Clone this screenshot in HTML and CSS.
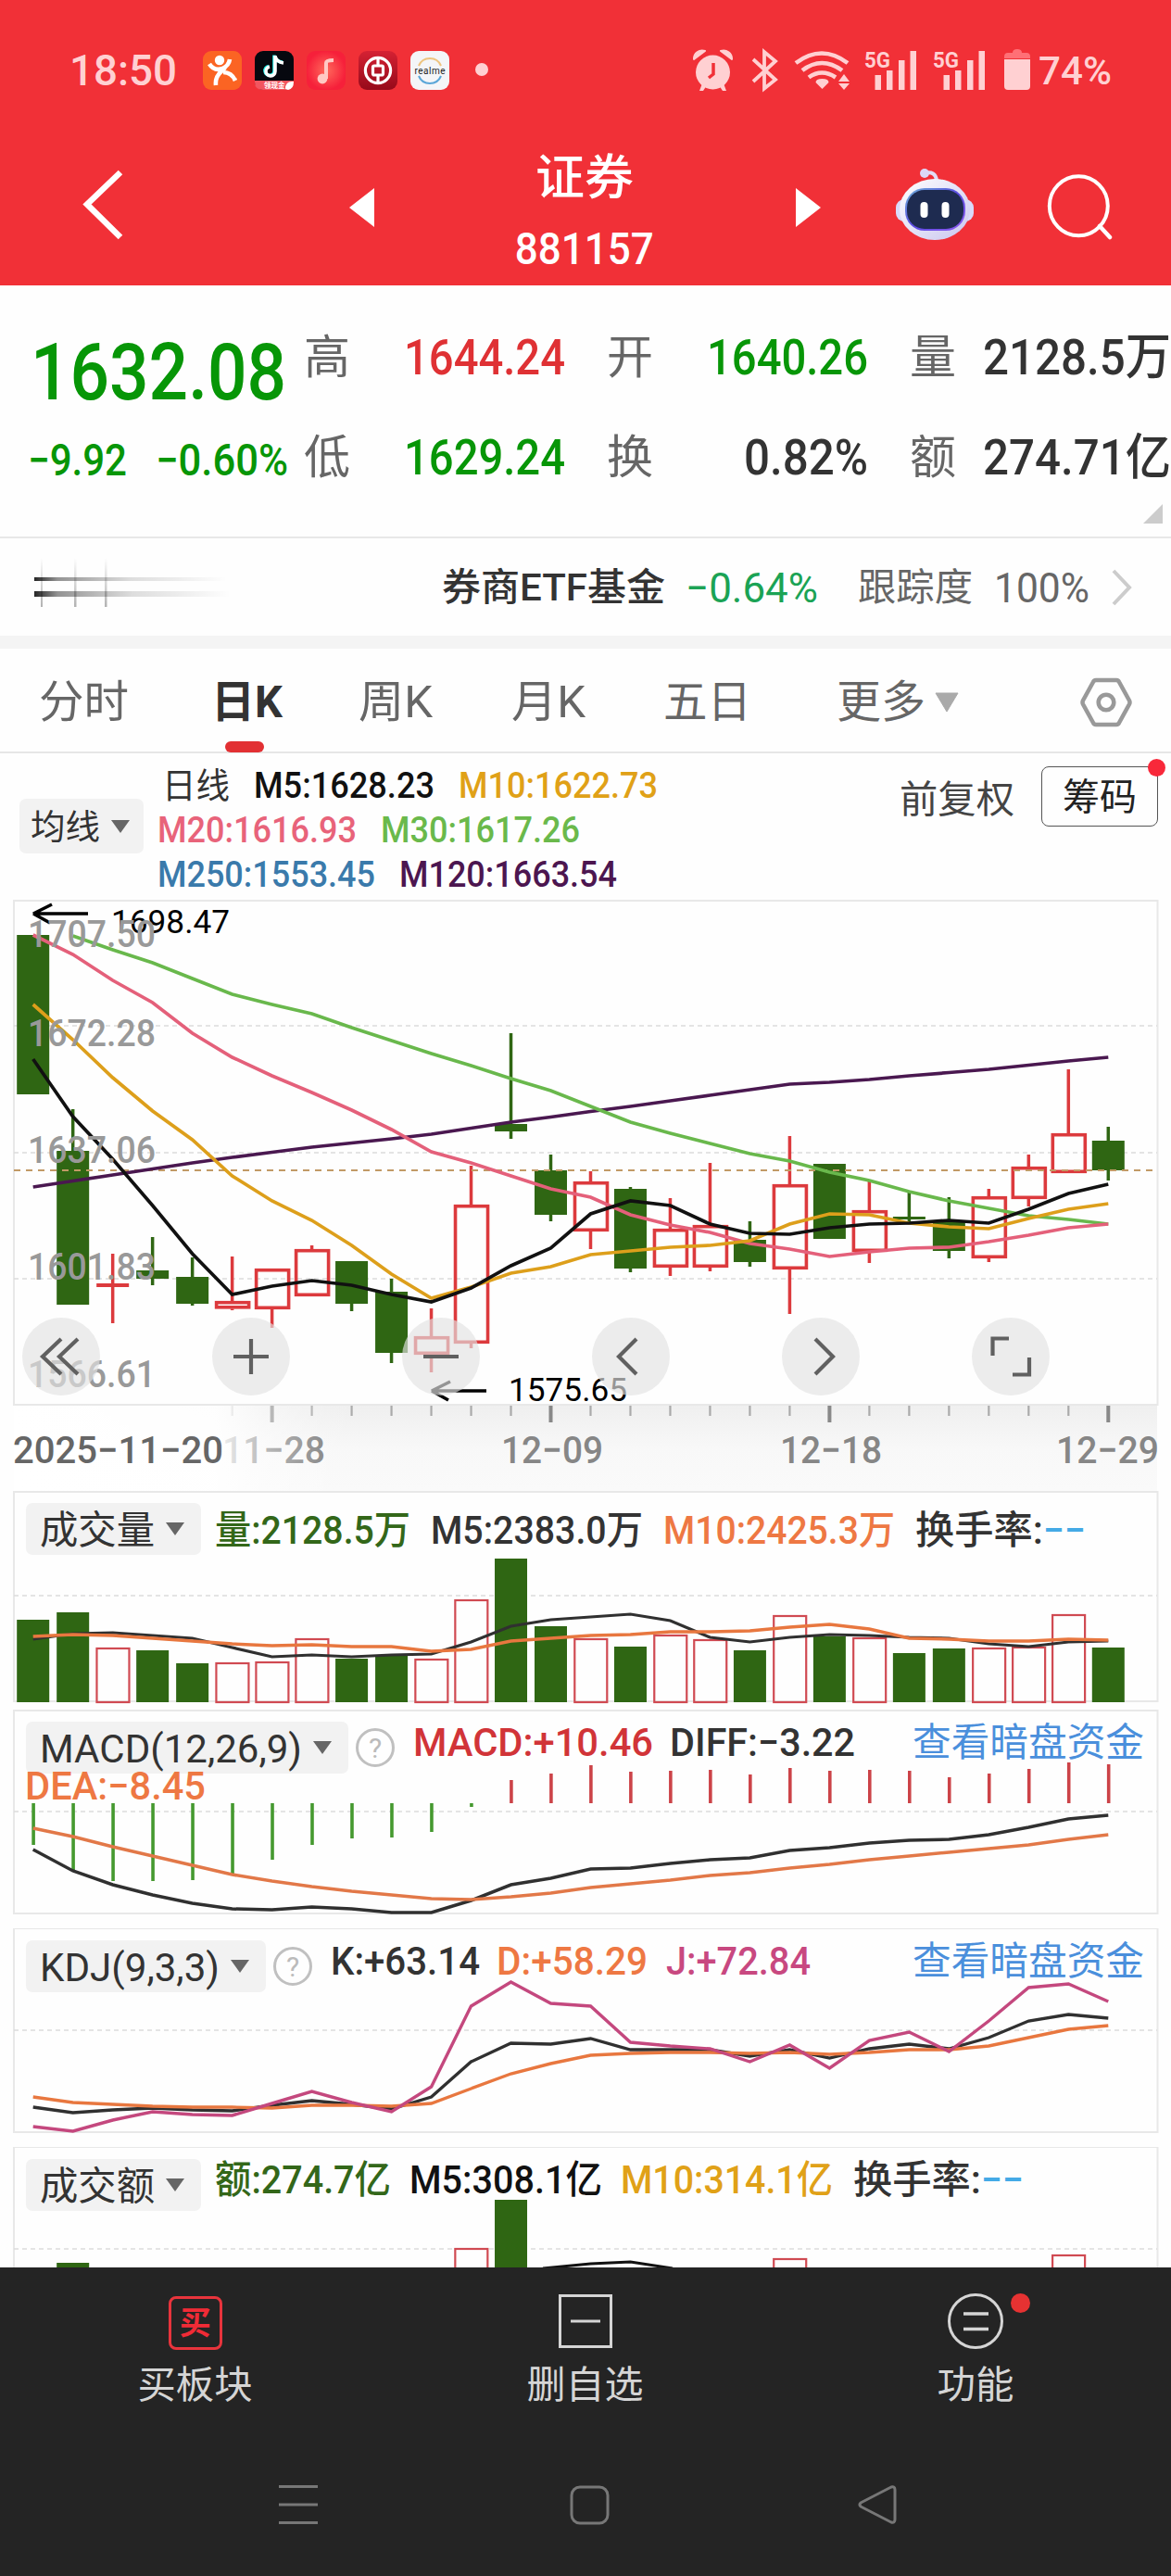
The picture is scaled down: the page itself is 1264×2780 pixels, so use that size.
FILE: index.html
```html
<!DOCTYPE html>
<html lang="zh-CN">
<head>
<meta charset="utf-8">
<title>证券 881157</title>
<link rel="stylesheet" href="styles.css">
</head>
<body>
<div class="screen">

<header class="top">
  <div class="status">
    <span class="fit clock" data-w="116">18:50</span>
    <div class="apps">
      <svg class="app" viewBox="0 0 42 42"><rect width="42" height="42" rx="9" fill="#fb6423"/><circle cx="18" cy="10" r="5.2" fill="#fff"/><path d="M7 14q5 8 14 5q7-3 8-10M14 37q-1-9 6-15l4-4M22 23q9 0 13 9" fill="none" stroke="#fff" stroke-width="4.6"/></svg>
      <svg class="app" viewBox="0 0 42 42"><rect width="42" height="42" rx="9" fill="#06080f"/><path d="M22 5v17a5 5 0 1 1-6-5M22 6q2 6 9 7" fill="none" stroke="#25f4ee" stroke-width="3.6" transform="translate(-1 -.6)"/><path d="M22 5v17a5 5 0 1 1-6-5M22 6q2 6 9 7" fill="none" stroke="#fff" stroke-width="3.6"/><path d="M0 32h42v2q0 8-9 8H9q-9 0-9-8z" fill="#f2555f"/><text x="10" y="40" font-size="7.5" font-weight="700" fill="#fff">领现金</text><path d="M33 41q0-9 9-8q0 8-6 9z" fill="#fff"/></svg>
      <svg class="app" viewBox="0 0 42 42"><defs><radialGradient id="mus"><stop offset="0" stop-color="#ff6a5c"/><stop offset="1" stop-color="#f6203a"/></radialGradient></defs><rect width="42" height="42" rx="9" fill="url(#mus)"/><circle cx="17" cy="30" r="5.4" fill="#ffc9c4"/><path d="M21 30V13q0-3 8-3" fill="none" stroke="#ffc9c4" stroke-width="4"/></svg>
      <svg class="app" viewBox="0 0 42 42"><defs><linearGradient id="boc" y2="1" x2="0"><stop stop-color="#d52133"/><stop offset="1" stop-color="#960a1a"/></linearGradient></defs><rect width="42" height="42" rx="9" fill="url(#boc)"/><g fill="none" stroke="#fff" stroke-width="3.2"><circle cx="21" cy="21" r="13.6"/><rect x="15.5" y="16" width="11" height="10" rx="1.5"/><path d="M21 7v9m0 10v9"/></g></svg>
      <svg class="app" viewBox="0 0 42 42"><rect width="42" height="42" rx="9" fill="#f4f5f8"/><path d="M9 16a13 13 0 0 1 24 0" fill="none" stroke="#eec37e" stroke-width="2"/><path d="M9 27a13 13 0 0 0 24 0" fill="none" stroke="#5aa6d8" stroke-width="2"/><text x="4.500" y="24.500" font-size="10" textLength="33" fill="#222">realme</text></svg>
    </div>
    <span class="more-dot"></span>
    <svg class="sys" viewBox="740 0 380 150" width="380" height="150">
      <g fill="#ffd0d2">
        <circle cx="768.500" cy="78" r="18.500"/>
        <path d="M748 64a9 9 0 0 1 12-9zM789 64a9 9 0 0 0-12-9z" stroke="#ffd0d2" stroke-width="2" stroke-linejoin="round"/>
        <path d="M757 90l-3 8h4l4-6zM780 90l3 8h-4l-4-6z"/>
        <path d="M886.500 96l-7-7q0-4 7-4t7 4z"/>
        <path d="M905 88l6-8 6 8zM905 90l6 7 6-7z" transform="translate(-1 0)"/>
        <rect x="943.500" y="81" width="6.500" height="16"/><rect x="956" y="76" width="6.500" height="21"/><rect x="969" y="65" width="6.500" height="32"/><rect x="981.500" y="55" width="6.500" height="42"/>
        <rect x="1017.500" y="81" width="6.500" height="16"/><rect x="1030" y="76" width="6.500" height="21"/><rect x="1043" y="65" width="6.500" height="32"/><rect x="1055.500" y="55" width="6.500" height="42"/>
        <path d="M1083 64h28v29q0 4-4 4h-20q-4 0-4-4z"/>
        <text x="932" y="72.500" font-size="24" font-weight="700" textLength="28" lengthAdjust="spacingAndGlyphs">5G</text>
        <text x="1006" y="72.500" font-size="24" font-weight="700" textLength="28" lengthAdjust="spacingAndGlyphs">5G</text>
      </g>
      <path d="M1083 63v-2q0-4 4-4h5q0-4 5-4t5 4h5q4 0 4 4v2z" fill="#ff7076"/>
      <path d="M769 68v12l-5 4" fill="none" stroke="#f13037" stroke-width="3.500"/>
      <path d="M812 64l24 22-12 9.500V56l12 10-24 22" fill="none" stroke="#ffd0d2" stroke-width="3.800"/>
      <g fill="none" stroke="#ffd0d2" stroke-width="4.600"><path d="M858 68q28-21 56 0M865 76q21-16 43 0M872 83.500q14-10 29 0"/></g>
    </svg>
    <span class="fit battery" data-w="79">74%</span>
  </div>

  <nav class="nav">
    <svg class="nav-back" viewBox="85 150 52 158" width="52" height="158"><path d="M130 186l-36 34.500 36 35.500" fill="none" stroke="#fff" stroke-width="6.500"/></svg>
    <svg class="nav-prev" viewBox="377 150 27 158" width="27" height="158"><path d="M404 203v42l-27-21z" fill="#fff"/></svg>
    <div class="title">
      <h1 class="fit" data-w="106">证券</h1>
      <p class="fit" data-w="150">881157</p>
    </div>
    <svg class="nav-next" viewBox="859 150 27 158" width="27" height="158"><path d="M859 203v42l27-21z" fill="#fff"/></svg>
    <svg class="nav-bot" viewBox="965 150 88 158" width="88" height="158">
      <defs><linearGradient id="shell" x2="1" y2="1"><stop stop-color="#fff"/><stop offset="1" stop-color="#c9c6ef"/></linearGradient>
      <linearGradient id="rim" x2="1" y2="1"><stop stop-color="#6fb4d8"/><stop offset=".5" stop-color="#5a4ae0"/><stop offset="1" stop-color="#8f5bf0"/></linearGradient></defs>
      <path d="M998 187q12-3 13 8" fill="none" stroke="#e2dcf5" stroke-width="4"/><circle cx="998" cy="187" r="5" fill="#dcd8f6"/>
      <rect x="967" y="215" width="84" height="24" rx="9" fill="#d9dafa"/>
      <ellipse cx="1009" cy="226" rx="38" ry="33" fill="url(#shell)"/>
      <rect x="977" y="203" width="65" height="46" rx="21" fill="url(#rim)"/>
      <rect x="979" y="205" width="61" height="42" rx="19" fill="#1e2b50"/>
      <rect x="993.500" y="218" width="8" height="17" rx="4" fill="#fff"/><rect x="1016.500" y="218" width="8" height="17" rx="4" fill="#fff"/>
    </svg>
    <svg class="nav-search" viewBox="1129 150 74 158" width="74" height="158"><ellipse cx="1164.300" cy="222.300" rx="31.500" ry="32" fill="none" stroke="#fff" stroke-width="4"/><path d="M1187 244l11 12" stroke="#fff" stroke-width="4.500" stroke-linecap="round"/></svg>
  </nav>
</header>

<section class="quote">
  <div class="last">
    <div class="price"><span class="fit" data-w="276">1632.08</span></div>
    <div class="change"><span class="fit" data-w="107">−9.92</span><span class="fit" data-w="143">−0.60%</span></div>
  </div>
  <div class="figures">
    <div class="pair"><span>高</span><b class="fit up" data-w="174">1644.24</b></div>
    <div class="pair"><span>开</span><b class="fit down" data-w="174">1640.26</b></div>
    <div class="pair"><span>量</span><b class="fit" data-w="203">2128.5万</b></div>
    <div class="pair"><span>低</span><b class="fit down" data-w="174">1629.24</b></div>
    <div class="pair"><span>换</span><b class="fit" data-w="134">0.82%</b></div>
    <div class="pair"><span>额</span><b class="fit" data-w="203">274.71亿</b></div>
  </div>
  <i class="corner"></i>
</section>

<section class="etf">
  <svg class="smear" viewBox="30 581 230 105" width="230" height="105">
    <defs><linearGradient id="sm" x2="1"><stop stop-color="#000" stop-opacity=".85"/><stop offset=".12" stop-color="#000" stop-opacity=".42"/><stop offset=".5" stop-color="#000" stop-opacity=".13"/><stop offset="1" stop-color="#000" stop-opacity="0"/></linearGradient>
    <linearGradient id="sv" x2="0" y2="1"><stop stop-color="#000" stop-opacity="0"/><stop offset="1" stop-color="#000" stop-opacity=".3"/></linearGradient></defs>
    <rect x="37" y="623" width="208" height="4" fill="url(#sm)"/><rect x="37" y="638" width="212" height="6" fill="url(#sm)"/>
    <g fill="url(#sv)"><rect x="44" y="602" width="2" height="53"/><rect x="80" y="602" width="2.500" height="53"/><rect x="113" y="602" width="2.500" height="53"/></g>
  </svg>
  <span class="fit etf-name" data-w="241">券商ETF基金</span>
  <span class="fit etf-chg" data-w="143">−0.64%</span>
  <span class="fit etf-lab" data-w="124">跟踪度</span>
  <span class="fit etf-val" data-w="103">100%</span>
  <svg viewBox="0 0 24 40" width="24" height="40"><path d="M3 2l17 18L3 38" fill="none" stroke="#ccc" stroke-width="4"/></svg>
</section>

<nav class="tabs">
  <span class="fit" data-w="97">分时</span>
  <span class="fit active" data-w="77">日K</span>
  <span class="fit" data-w="80">周K</span>
  <span class="fit" data-w="80">月K</span>
  <span class="fit" data-w="95">五日</span>
  <span class="fit" data-w="96">更多</span>
  <svg class="tri" viewBox="0 0 26 22" width="26" height="22"><path d="M1 1h24L13 21z" fill="#aaa" stroke="#aaa" stroke-linejoin="round"/></svg>
  <svg class="gear" viewBox="0 0 58 54" width="58" height="54"><g fill="none" stroke="#999"><path d="M18 3h22q2 0 3 2l11 20q1 2 0 4L43 49q-1 2-3 2H18q-2 0-3-2L4 29q-1-2 0-4L15 5q1-2 3-2z" stroke-width="4.500"/><circle cx="29" cy="27" r="8.300" stroke-width="4.600"/></g></svg>
</nav>

<section class="ma">
  <span class="chip ma-chip"><span class="fit" data-w="75">均线</span><i></i></span>
  <div class="ma-rows">
    <div><span class="fit c-dark" data-w="73">日线</span><span class="fit c-black" data-w="195">M5:1628.23</span><span class="fit c-gold" data-w="215">M10:1622.73</span></div>
    <div><span class="fit c-pink" data-w="215">M20:1616.93</span><span class="fit c-lime" data-w="215">M30:1617.26</span></div>
    <div><span class="fit c-blue" data-w="235">M250:1553.45</span><span class="fit c-plum" data-w="235">M120:1663.54</span></div>
  </div>
  <span class="fit adjust" data-w="124">前复权</span>
  <span class="chips-btn"><span class="fit" data-w="80">筹码</span></span>
</section>

<section class="panel">
  <svg id="kline" viewBox="0 971 1264 546" width="1264" height="546"></svg>
  <div class="tools">
    <button><svg viewBox="-42 -42 84 84"><path d="M0-19L-20 0 0 19M18-19L-2 0 18 19"/></svg></button>
    <button><svg viewBox="-42 -42 84 84"><path d="M-19 0h38M0-19v38"/></svg></button>
    <button><svg viewBox="-42 -42 84 84"><path d="M-19 0h38"/></svg></button>
    <button><svg viewBox="-42 -42 84 84"><path d="M6-19L-13 0 6 19"/></svg></button>
    <button><svg viewBox="-42 -42 84 84"><path d="M-6-19L13 0-6 19"/></svg></button>
    <button><svg viewBox="-42 -42 84 84"><path d="M-2-19.500h-17.500V-1M2 19.500h18V1"/></svg></button>
  </div>
</section>

<svg id="axis" class="block" viewBox="0 1517 1264 92" width="1264" height="92"></svg>

<section class="panel volume">
  <svg id="volume" viewBox="0 1609 1264 236" width="1264" height="236"></svg>
  <div class="legend">
    <span class="chip"><span class="fit" data-w="124">成交量</span><i></i></span>
    <span class="fit c-green g15" data-w="211">量:2128.5万</span>
    <span class="fit c-dark g22" data-w="229">M5:2383.0万</span>
    <span class="fit c-orange g22" data-w="250">M10:2425.3万</span>
    <span class="fit c-dark g22" data-w="138">换手率:</span><span class="fit c-sky" data-w="46">−−</span>
  </div>
</section>

<section class="panel">
  <svg id="macd" viewBox="0 1845 1264 236" width="1264" height="236"></svg>
  <div class="legend">
    <span class="chip"><span class="fit" data-w="283">MACD(12,26,9)</span><i></i></span>
    <span class="help">?</span>
    <span class="fit c-red g20" data-w="259">MACD:+10.46</span>
    <span class="fit c-dark g18" data-w="200">DIFF:−3.22</span>
    <a class="fit link" data-w="250">查看暗盘资金</a>
    <span class="fit c-orange second" data-w="195">DEA:−8.45</span>
  </div>
</section>

<section class="panel">
  <svg id="kdj" viewBox="0 2081 1264 236" width="1264" height="236"></svg>
  <div class="legend">
    <span class="chip"><span class="fit" data-w="194">KDJ(9,3,3)</span><i></i></span>
    <span class="help">?</span>
    <span class="fit c-dark g20" data-w="161">K:+63.14</span>
    <span class="fit c-orange g18" data-w="163">D:+58.29</span>
    <span class="fit c-rose g20" data-w="156">J:+72.84</span>
    <a class="fit link" data-w="250">查看暗盘资金</a>
  </div>
</section>

<section class="panel amount">
  <svg id="amount" viewBox="0 2317 1264 130" width="1264" height="130"></svg>
  <div class="legend">
    <span class="chip"><span class="fit" data-w="124">成交额</span><i></i></span>
    <span class="fit c-green g15" data-w="190">额:274.7亿</span>
    <span class="fit c-black g20" data-w="208">M5:308.1亿</span>
    <span class="fit c-gold g20" data-w="229">M10:314.1亿</span>
    <span class="fit c-dark g22" data-w="138">换手率:</span><span class="fit c-sky" data-w="46">−−</span>
  </div>
</section>

<footer class="bottom">
  <div class="actions">
    <div class="action"><span class="buy">买</span><span class="fit" data-w="124">买板块</span></div>
    <div class="action"><svg viewBox="0 0 60 60" width="60" height="60"><path d="M2.500 2.500h55v55h-55zM14 30h32" fill="none" stroke="#d5d5d5" stroke-width="3"/></svg><span class="fit" data-w="126">删自选</span></div>
    <div class="action"><svg viewBox="0 0 60 60" width="60" height="60"><circle cx="30" cy="30" r="28.500" fill="none" stroke="#d5d5d5" stroke-width="3"/><path d="M17 22h27M17 38.500h27" stroke="#d5d5d5" stroke-width="3.500"/></svg><i class="badge"></i><span class="fit" data-w="83">功能</span></div>
  </div>
  <svg class="block" viewBox="0 2640 1264 140" width="1264" height="140"><g fill="none" stroke="#777" stroke-width="3"><path d="M301 2683.500h42M301 2703h42M301 2722.500h42"/><rect x="617" y="2684" width="39" height="39" rx="9"/><path d="M929 2701l33-17q4-1 4 3v32q0 4-4 3l-33-17q-2-2 0-4z" stroke-linejoin="round"/></g></svg>
</footer>
</div>
<script src="chart.js"></script>
</body>
</html>
```
FILE: styles.css
```css
* { box-sizing: border-box; margin: 0; padding: 0; }
body {
  width: 1264px;
  background: #fefefe;
  color: #333;
  font-family: Roboto, "Noto Sans CJK SC", sans-serif;
}
svg { display: block; flex: none; }
svg text { font-family: Roboto, "Noto Sans CJK SC", sans-serif; }
.screen { width: 1264px; height: 2780px; overflow: hidden; }
.fit { display: inline-block; flex: none; white-space: nowrap; transform-origin: 0 50%; }

/* status bar and title */
.top { height: 308px; background: #f13037; color: #fff; }
.status { height: 150px; display: flex; align-items: center; padding-left: 75px; }
.clock { font-size: 47px; font-weight: 500; line-height: 150px; padding-top: 2px; color: #ffd0d2; }
.apps { display: flex; gap: 14px; margin-left: 28px; padding-top: 2px; }
.app { width: 42px; height: 42px; }
.more-dot { width: 14px; height: 14px; border-radius: 50%; background: #ffd0d2; margin-left: 28px; }
.sys { margin-left: 214px; }
.battery { font-size: 42px; font-weight: 500; color: #ffd0d2; line-height: 150px; padding-top: 4px; }
.nav { height: 158px; display: flex; }
.nav-back { margin-left: 85px; }
.nav-prev { margin-left: 240px; }
.title { width: 170px; margin-left: 142px; display: flex; flex-direction: column; align-items: center; }
.title h1 { font-size: 52px; font-weight: 500; line-height: 76px; margin-top: 5px; }
.title p { font-size: 48px; line-height: 76px; font-weight: 500; }
.nav-next { margin-left: 143px; }
.nav-bot { margin-left: 79px; }
.nav-search { margin-left: 76px; }

/* quote */
.quote { position: relative; height: 273px; display: flex; border-bottom: 2px solid #e8e8e8; }
.last { width: 328px; padding-top: 42px; color: #079607; font-weight: 500; }
.price { font-size: 86px; line-height: 104px; padding-left: 33px; height: 104px; }
.change { font-size: 48px; line-height: 86px; padding-left: 30px; display: flex; gap: 31px; }
.figures { width: 936px; padding-top: 24px; display: grid; grid-template-columns: 282px 282px 282px; column-gap: 45px; grid-auto-rows: 108px; }
.pair { display: flex; justify-content: space-between; line-height: 108px; font-size: 50px; color: #666; }
.pair b { font-size: 53px; font-weight: 500; color: #333; }
.pair b.up { color: #df3134; }
.pair b.down { color: #079607; }
.corner { position: absolute; right: 9px; top: 236px; border: solid transparent; border-width: 0 0 21px 21px; border-bottom-color: #ccc; }

/* linked fund */
.etf { height: 119px; display: flex; align-items: center; padding-left: 30px; border-bottom: 14px solid #f4f4f4; line-height: 107px; font-size: 41px; color: #666; }
.etf .fit { padding-top: 2px; }
.etf-name { margin-left: 217px; color: #333; font-weight: 500; }
.etf-chg { margin-left: 22px; font-size: 45px; color: #1ba355; }
.etf-lab { margin-left: 43px; }
.etf-val { margin: 0 23px 0 23px; font-size: 45px; }

/* period tabs */
.tabs { position: relative; height: 113px; display: flex; align-items: center; padding: 5px 0 0 42px; border-bottom: 2px solid #e6e6e6; font-size: 48px; line-height: 108px; color: #666; }
.tabs .active { color: #333; font-weight: 700; margin: 0 82px 0 89px; }
.tabs .fit:nth-child(3) { margin-right: 85px; }
.tabs .fit:nth-child(5) { margin: 0 92px 0 84px; }
.tabs .tri { margin-left: 10px; }
.tabs .gear { margin-left: 130px; }
.tabs::after { content: ""; position: absolute; left: 243px; bottom: -1px; width: 42px; height: 12px; border-radius: 6px; background: #e23033; }

/* moving averages */
.chip { flex: none; display: flex; align-items: center; gap: 12px; height: 56px; padding-left: 15px; background: #f2f2f2; border-radius: 7px; line-height: 56px; font-size: 42px; font-weight: 400; color: #333; padding-right: 18px; }
.chip .fit { padding-top: 3px; }
.chip i { border: solid transparent; border-width: 14px 10.5px 0; border-top-color: #666; }
.ma { height: 158px; display: flex; padding: 0 14px 0 21px; }
.ma-chip { height: 59px; width: 134px; margin-top: 49px; padding: 0 12px; line-height: 59px; font-size: 37px; }
.ma-rows { width: 780px; padding: 11px 0 0 15px; font-size: 39px; line-height: 48px; }
.ma-rows div { display: flex; height: 48px; gap: 26px; }
.ma-rows div:first-child { padding-left: 5px; font-size: 38px; }
.ma-rows .fit { font-weight: 500; }
.ma-rows .c-dark { font-weight: 400; }
.adjust { margin: 26px 0 0 36px; font-size: 41px; line-height: 48px; color: #444; }
.chips-btn { position: relative; width: 126px; height: 65px; margin: 14px 0 0 29px; padding-left: 22px; border: 1.5px solid #555; border-radius: 8px; font-size: 40px; line-height: 65px; color: #222; }
.chips-btn::after { content: ""; position: absolute; right: -9px; top: -9px; width: 19px; height: 19px; border-radius: 50%; background: #f8283a; }

/* chart panels: drawing and legend share one grid cell */
.panel { display: grid; }
.panel > * { grid-area: 1 / 1; }
.tools { align-self: start; display: flex; gap: 121px; margin: 451px 0 0 24px; }
.tools button { width: 84px; height: 84px; border: 0; border-radius: 50%; background: rgba(226, 226, 226, .66); }
.tools path { fill: none; stroke: #606060; stroke-width: 4.2; }
.legend { align-self: start; display: flex; flex-wrap: wrap; padding: 13px 0 0 28px; font-size: 42px; line-height: 44px; width: 1264px; }
.legend > .fit { margin-top: 1px; height: 44px; font-weight: 500; }
.volume .legend > .fit { margin-top: 8px; }
.legend > .link { margin-left: auto; margin-right: 29px; font-weight: 400; color: #4a8fdc; }
.legend > .second { margin: -8px 0 0 -1px; }
.legend .g15 { margin-left: 15px; }
.legend .g18 { margin-left: 18px; }
.legend .g20 { margin-left: 20px; }
.legend .g22 { margin-left: 22px; }
.help { width: 42px; height: 42px; margin: 7px 0 0 8px; border: 3px solid #c0c0c0; border-radius: 50%; font-size: 30px; line-height: 37px; text-align: center; color: #bbb; }
.c-dark { color: #333; } .c-black { color: #111; } .c-gold { color: #e0a117; }
.c-pink { color: #e8637a; } .c-lime { color: #6ab94b; } .c-blue { color: #3a7aab; }
.c-plum { color: #4c1650; } .c-green { color: #336719; } .c-orange { color: #ee7843; }
.c-red { color: #d13438; } .c-rose { color: #c84880; } .c-sky { color: #44aae6; }

/* bottom bars */
.bottom { height: 333px; background: #242424; color: #d5d5d5; }
.actions { height: 193px; display: grid; grid-template-columns: repeat(3, 1fr); }
.action { position: relative; display: flex; flex-direction: column; align-items: center; padding-top: 28px; font-size: 41px; line-height: 60px; }
.action .fit { margin-top: 9px; }
.buy { width: 58px; height: 58px; margin: 3px 0 -1px; border: 3px solid #e8343c; border-radius: 8px; color: #f02b36; font-size: 34px; font-weight: 700; line-height: 52px; text-align: center; }
.badge { position: absolute; left: 248px; top: 28px; width: 21px; height: 21px; border-radius: 50%; background: #e63232; }
```
FILE: chart.js
```js
document.querySelectorAll('.fit').forEach(el => {
  const target = +el.dataset.w, natural = el.getBoundingClientRect().width;
  if (getComputedStyle(el.parentElement).flexDirection === 'column') {
    el.style.transformOrigin = '50% 50%';
  } else {
    el.style.marginRight = (parseFloat(getComputedStyle(el).marginRight) + target - natural) + 'px';
  }
  el.style.transform = `scaleX(${target / natural})`;
});

const X = i => 35.7 + 42.985 * i;
const GREEN = '#2f6613', RED = '#dc3a3d';
const line = (ys, c, w = 3.7) => `<polyline fill="none" stroke="${c}" stroke-width="${w}" points="${
  ys.map((y, i) => y === null ? '' : `${X(i).toFixed(1)},${y}`).join(' ')}"/>`;
const dash = (y, c = '#dcdcdc', w = 1.5, d = '5 4') => `<path d="M15 ${y}H1249" stroke="${c}" stroke-width="${w}" stroke-dasharray="${d}"/>`;
const frame = (t, b) => `<path d="M15 ${t + 1}H1249.500V${b}H15z" fill="none" stroke="#e8e8e8" stroke-width="2"/>`;
const label = (s, x, y, w, c, size = 41, weight = 400) =>
  `<text x="${x}" y="${y}" font-size="${size}" font-weight="${weight}" fill="${c}" textLength="${w}" lengthAdjust="spacingAndGlyphs">${s}</text>`;
const bar = (i, top, bottom, up) => up
  ? `<rect x="${X(i) - 17.2}" y="${top + 1}" width="35" height="${bottom - top - 1}" fill="none" stroke="#d04a52" stroke-width="2.200"/>`
  : `<rect x="${X(i) - 17.5}" y="${top}" width="35" height="${bottom - top}" fill="${GREEN}"/>`;
const put = (id, html) => { document.getElementById(id).innerHTML = html; };

// [rising, body top, body bottom, high, low]
const K = [
  [0,1009,1181,1009,1181],[0,1242,1408,1197,1408],[1,1385,1389,1353,1428],[0,1371,1380,1335,1387],
  [0,1378,1407,1357,1409],[1,1404,1412.5,1356,1414],[1,1369,1413,1369,1433],[1,1348,1399,1344,1399],
  [0,1361,1407,1361,1415],[0,1394,1460,1380,1471],[1,1442,1462,1412,1481],[1,1300,1450,1258,1455],
  [0,1213,1221,1115,1229],[0,1263,1311,1246,1318],[1,1275,1329,1264,1348],[0,1283,1369,1281,1373],
  [1,1326,1368,1293,1377],[1,1322,1368,1255,1372],[0,1338,1362,1318,1367],[1,1278,1370,1226,1418],
  [0,1256,1337,1256,1337],[1,1306,1351,1275,1363],[0,1313,1316,1287,1320],[0,1317,1350,1292,1358],
  [1,1291,1358,1283,1362],[1,1259,1294,1246,1302],[1,1223,1266,1154,1266],[0,1231,1263,1216,1274]];
const candle = ([up, t, b, h, l], i) => {
  const x = X(i), c = up ? RED : GREEN;
  let s = `<path d="M${x} ${h}V${t}M${x} ${b}V${l}" stroke="${c}" stroke-width="3.500"/>`;
  if (up && b - t > 6) s += `<rect x="${x - 17}" y="${t + 1.700}" width="35" height="${b - t - 3.400}" fill="none" stroke="${c}" stroke-width="3.600"/>`;
  else s += `<rect x="${x - 17.500}" y="${t}" width="35" height="${b - t}" fill="${c}"/>`;
  return s;
};
const ma5 = [1143,1205,1251,1301,1353,1397,1388,1382,1387,1397,1405,1390,1366,1347,1310,1296,1301,1321,1331,1332,1325,1321,1320,1317,1320,1305,1288,1278];
const ma10 = [1084,1122,1163,1199,1230,1269,1296,1317,1344,1375,1401,1389,1374,1367,1354,1350,1346,1344,1339,1321,1310,1311,1320,1324,1326,1315,1305,1299];
const ma20 = [1009,1030,1058,1082,1115,1141,1161,1179,1198,1219,1243,1255,1269,1283,1292,1311,1322,1330,1342,1348,1356,1351,1347,1346,1340,1333,1325,1321];
const ma30 = [null,1010,1025,1039,1056,1073,1084,1094,1109,1123,1137,1150,1164,1177,1194,1211,1223,1234,1245,1253,1265,1274,1286,1296,1304,1312,1316,1321];
const ma120 = [1281,1274.5,1268,1261.5,1255,1249,1243.5,1238,1233.5,1229,1224,1217.5,1211,1205.5,1199.5,1194,1188,1182,1176,1170,1168,1165,1161,1157.5,1154,1149.5,1145,1141];
const arrow = (x, y) => `<path d="M${x + 60} ${y}H${x + 1}l20-10M${x + 1} ${y}l18 10" fill="none" stroke="#000" stroke-width="3.600"/>`;
put('kline', frame(971, 1516) + dash(1107) + dash(1244) + dash(1380)
  + K.map(candle).join('') + dash(1263, '#c29a66', 1.8, '7 6')
  + line(ma120, '#4a1850') + line(ma30, '#69b84c') + line(ma20, '#e4607a') + line(ma10, '#dd9f1b') + line(ma5, '#111')
  + arrow(35, 986) + label('1698.47', 120, 1007, 128, '#000', 35.5)
  + [['1707.50',1022],['1672.28',1129],['1637.06',1255],['1601.83',1381],['1566.61',1497]]
      .map(([s, y]) => label(s, 30, y, 138, '#999', 41, 500)).join('')
  + arrow(465, 1501) + label('1575.65', 549, 1512, 128, '#000', 35.5));

let ticks = '';
for (let i = 5; i < 28; i++) {
  const major = i % 7 === 6;
  ticks += `<path d="M${X(i)} 1517v${major ? 18 : 11}" stroke="${major ? '#888' : '#aaa'}" stroke-width="${major ? 4 : 2.200}"/>`;
}
put('axis', `<defs>
  <linearGradient id="shade" x2="0" y2="1"><stop stop-color="#efefef"/><stop offset=".5" stop-color="#f8f8f8"/><stop offset="1" stop-color="#fafafa"/></linearGradient>
  <linearGradient id="veil" gradientUnits="userSpaceOnUse" x1="15" x2="390" y1="0" y2="0"><stop stop-color="#fff"/><stop offset=".58" stop-color="#fff" stop-opacity=".92"/><stop offset=".72" stop-color="#fff" stop-opacity=".45"/><stop offset=".9" stop-color="#fff" stop-opacity=".08"/><stop offset="1" stop-color="#fff" stop-opacity="0"/></linearGradient></defs>
  <rect x="15" y="1517" width="1234" height="92" fill="url(#shade)"/>` + ticks
  + label('11−28', 240, 1579, 111, '#808080', 41, 500)
  + '<rect x="15" y="1517" width="375" height="92" fill="url(#veil)"/>'
  + label('2025−11−20', 14, 1579, 227, '#666', 41, 500)
  + label('12−09', 541, 1579, 110, '#868686', 41, 500) + label('12−18', 842, 1579, 110, '#868686', 41, 500) + label('12−29', 1140, 1579, 111, '#868686', 41, 500));

const vol = [1748,1740,1778,1781,1795,1794,1793,1768,1790,1786,1790,1726,1682,1755,1768,1777,1764,1769,1781,1743,1766,1767,1784,1779,1778,1777,1742,1778];
put('volume', frame(1609, 1836) + dash(1722) + vol.map((t, i) => bar(i, t, 1837, K[i][0])).join('')
  + line([1769,1763,1762,1765,1768,1778,1788,1786,1788,1786,1785,1772,1755,1748,1745,1742,1749,1767,1772,1767,1764,1765,1767,1768,1774,1777,1772,1771], '#303030', 3.2)
  + line([1766,1764,1765,1768,1771,1774,1776,1775,1777,1777,1782,1780,1771,1768,1765,1764,1761,1761,1760,1756,1753,1758,1768,1769,1771,1771,1769,1770], '#e8773f', 3.5));

const hist = [1991,2018,2030,2030,2029,2022,2007,1991,1984,1983,1977,1950,1921,1914,1905,1912,1911,1910,1915,1908,1911,1910,1911,1918,1914,1909,1902,1904];
put('macd', frame(1845, 2065) + dash(1955)
  + hist.map((y, i) => `<path d="M${X(i) + .4} 1946V${y}" stroke="${y > 1946 ? '#45992f' : '#cc4348'}" stroke-width="3.600"/>`).join('')
  + line([1996,2019,2034,2045,2054,2060,2061,2058,2060,2064,2064,2051,2034,2027,2017,2016,2011,2007,2005,1997,1994,1989,1986,1985,1980,1972,1963,1959], '#303030', 3.5)
  + line([1973,1982,1993,2003,2013,2023,2030,2036,2041,2045,2049,2050,2047,2043,2037,2033,2029,2024,2021,2016,2012,2007,2003,1999,1995,1991,1985,1980], '#e27848', 3.5));

put('kdj', frame(2080, 2301) + dash(2191)
  + line([2274,2280,2277,2275,2277,2278,2272,2267,2271,2276,2263,2225,2205,2206,2200,2212,2212,2212,2219,2212,2221,2211,2206,2211,2199,2181,2174,2178], '#303030', 3.3)
  + line([2263,2269,2271,2273,2274,2274,2275,2272,2272,2273,2270,2254,2238,2227,2218,2216,2215,2215,2216,2215,2217,2215,2212,2212,2208,2199,2190,2186], '#e8773f', 3.4)
  + line([2295,2300,2288,2279,2282,2283,2270,2257,2269,2279,2252,2165,2139,2162,2165,2204,2208,2211,2225,2207,2232,2202,2193,2214,2181,2145,2141,2160], '#c4487e', 3.4));

put('amount', frame(2316, 2460) + dash(2427)
  + [[1,2442],[11,2426],[12,2374],[19,2437],[26,2433]].map(([i, t]) => bar(i, t, 2460, K[i][0])).join('')
  + '<path d="M586 2448L637.500 2443L680.500 2441L726 2448" fill="none" stroke="#111" stroke-width="3"/>');
```
